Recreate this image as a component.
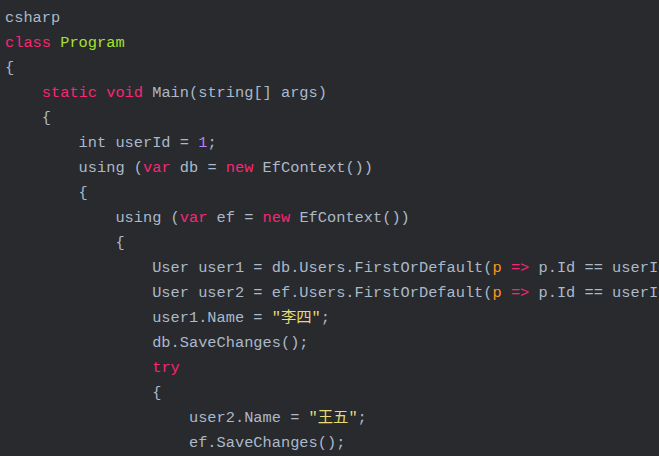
const K = "text-[#f92672]";

const lines = [
  [["csharp"]],
  [["class", K], [" "], ["Program", "text-[#a6e22e]"]],
  [["{"]],
  [["    "], ["static", K], [" "], ["void", K], [" Main(string[] args)"]],
  [["    {"]],
  [["        int userId = "], ["1", "text-[#ae81ff]"], [";"]],
  [["        using ("], ["var", K], [" db = "], ["new", K], [" EfContext())"]],
  [["        {"]],
  [["            using ("], ["var", K], [" ef = "], ["new", K], [" EfContext())"]],
  [["            {"]],
  [["                User user1 = db.Users.FirstOrDefault("], ["p", "text-[#fd971f]"], [" "], ["=>", K], [" p.Id == userId);"]],
  [["                User user2 = ef.Users.FirstOrDefault("], ["p", "text-[#fd971f]"], [" "], ["=>", K], [" p.Id == userId);"]],
  [["                user1.Name = "], ["\"李四\"", "text-[#e6db74]"], [";"]],
  [["                db.SaveChanges();"]],
  [["                "], ["try", K]],
  [["                {"]],
  [["                    user2.Name = "], ["\"王五\"", "text-[#e6db74]"], [";"]],
  [["                    ef.SaveChanges();"]],
];

export default function App() {
  return (
    <div className="w-[659px] h-[456px] overflow-hidden bg-[#282a2e]">
      <pre
        className="pt-[6px] pl-[5px] text-[15.33px] leading-[25px] text-[#abb9c9] whitespace-pre"
        style={{ fontFamily: '"Liberation Mono", "Noto Sans CJK SC", monospace' }}
      >
        {lines.map((line, i) => (
          <div key={i} className="h-[25px]">
            {line.map(([text, cls], j) => (
              <span key={j} className={cls}>{text}</span>
            ))}
          </div>
        ))}
      </pre>
    </div>
  );
}
